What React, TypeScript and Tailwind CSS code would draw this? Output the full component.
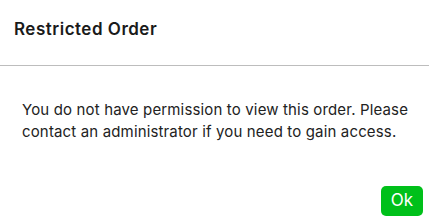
export default function App() {
  return (
    <div className="w-[429px] h-[222px] bg-white font-['Inter',sans-serif] text-[#1a1a1a] flex flex-col">
      <div className="shrink-0 h-[66px] px-[14px] pt-[18px] border-b border-[#bdbdbd]">
        <h2 className="text-[17px] font-semibold leading-[22px] tracking-[0.5px]">Restricted Order</h2>
      </div>
      <div className="shrink-0 pl-[22px] pr-[10px] pt-[33px]">
        <p className="text-[15px] leading-[22px] tracking-[0.15px] text-[#222]">
          You do not have permission to view this order. Please contact an administrator if you need to gain access.
        </p>
      </div>
      <div className="shrink-0 flex justify-end px-[6px] pt-[43px]">
        <button className="h-[30px] px-[10px] rounded-[5px] bg-[#00c01a] text-white text-[17px]">Ok</button>
      </div>
    </div>
  )
}
